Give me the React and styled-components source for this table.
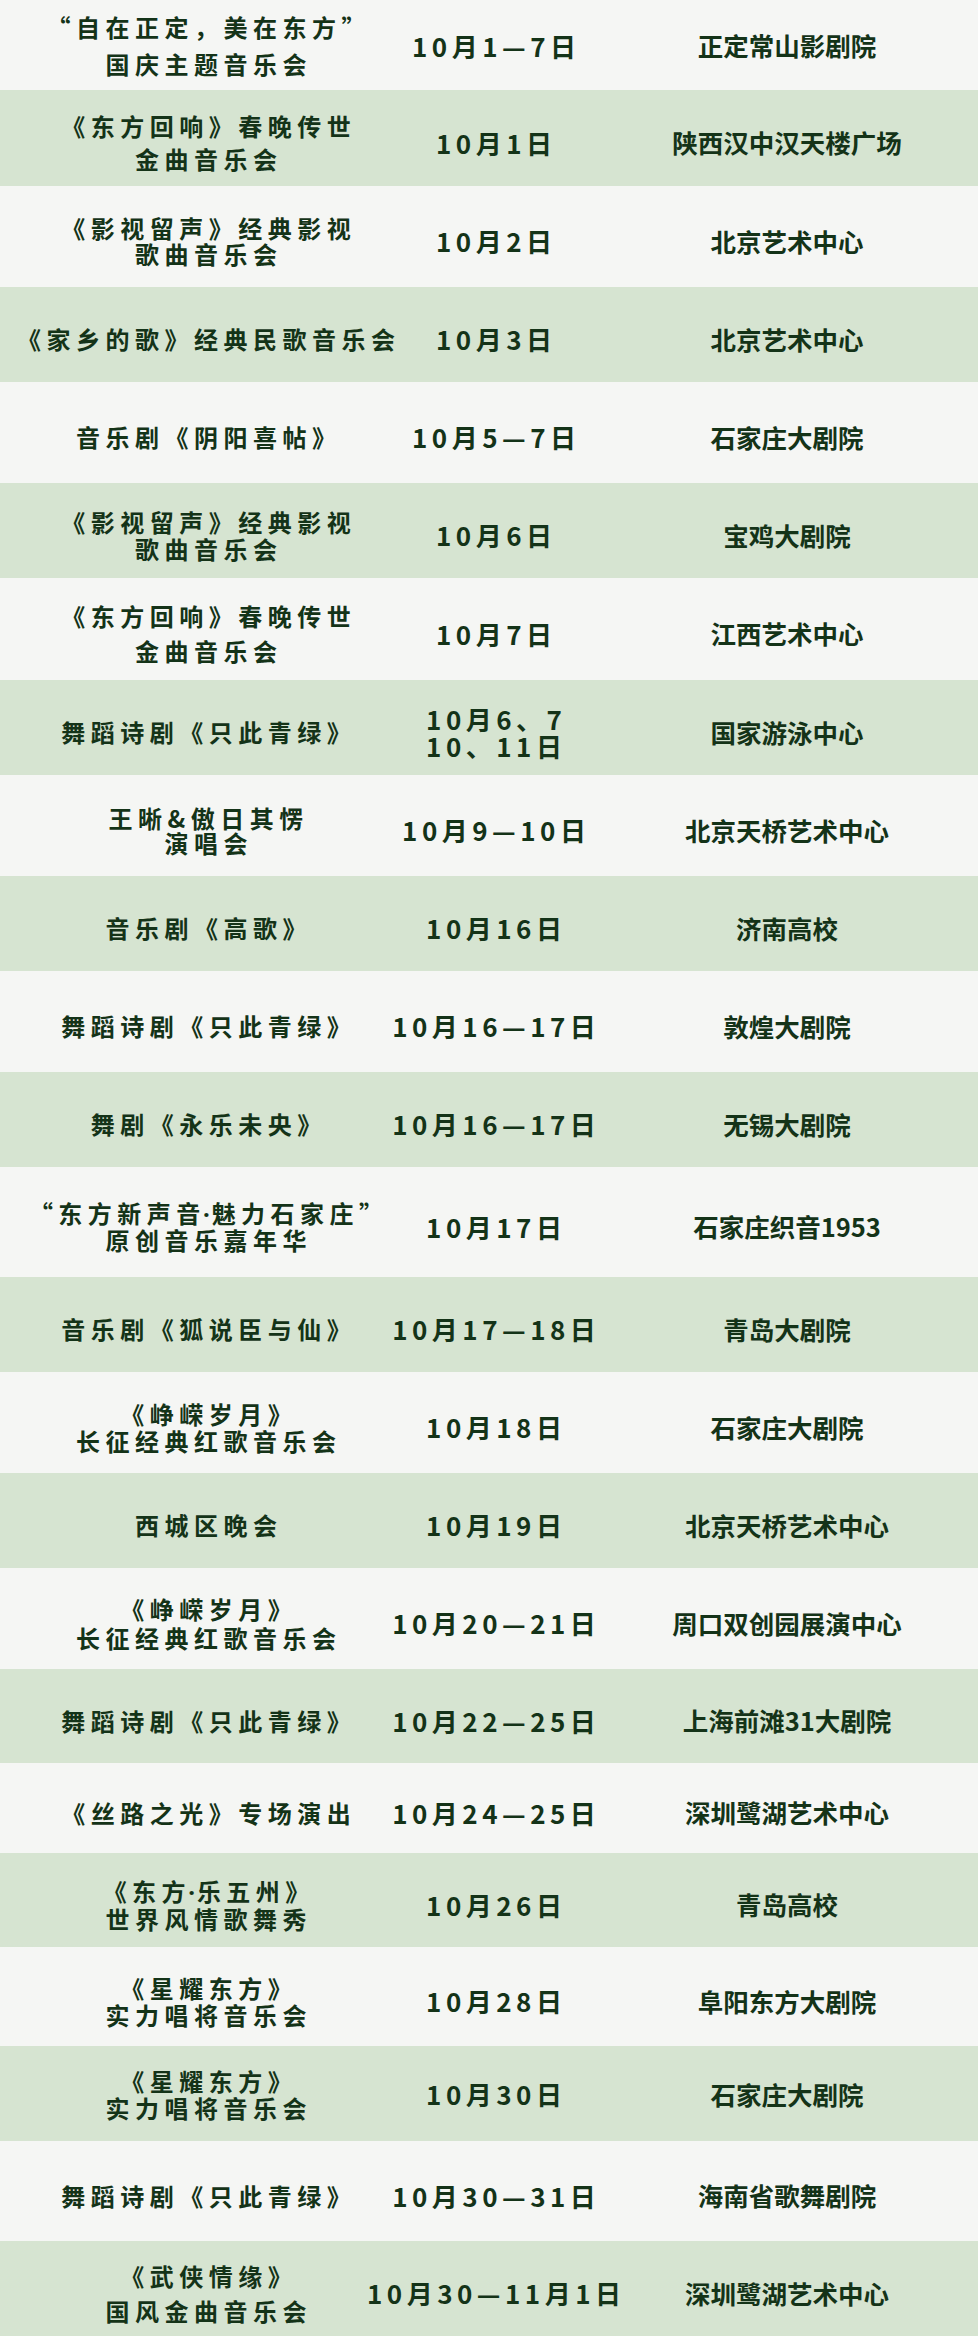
import React from "react";
import styled, { createGlobalStyle } from "styled-components";

const GlobalStyle = createGlobalStyle`
  html, body {
    margin: 0;
    padding: 0;
    background: #f5f6f4;
  }
  body {
    font-family: "Noto Sans CJK SC", "Noto Sans", sans-serif;
  }
`;

const Table = styled.div`
  width: 978px;
  display: flex;
  flex-direction: column;
`;

const Row = styled.div`
  display: grid;
  grid-template-columns: 412px 164px 1fr;
  height: ${(p) => p.$h}px;
  background: ${(p) => (p.$green ? "#d6e4d1" : "#f5f6f4")};
  color: #143318;
  padding-top: ${(p) => (p.$pt != null ? p.$pt : 8)}px;
  box-sizing: border-box;
`;

const Cell = styled.div`
  display: flex;
  justify-content: center;
  align-items: center;
  white-space: nowrap;
  padding-left: ${(p) => p.$pad || 0}px;
`;

const Title = styled.div`
  font-size: 24px;
  font-weight: 700;
  letter-spacing: 5.5px;
  margin-right: -5.5px;
  line-height: ${(p) => p.$lh}px;
  text-align: center;
`;

const Dot = styled.span`
  font-family: "Noto Sans", sans-serif;
  letter-spacing: 2px;
  margin-left: -3px;
`;

const DateText = styled.div`
  font-size: 26px;
  font-weight: 700;
  letter-spacing: 4.5px;
  margin-right: -4.5px;
  line-height: 27px;
  text-align: center;
`;

const Venue = styled.div`
  font-size: 25.5px;
  font-weight: 700;
  line-height: 30px;
  text-align: center;
`;

const rows = [
  { h: 90, lh: 37, pt: 0, title: ["“自在正定，美在东方”", "国庆主题音乐会"], date: ["10月1—7日"], venue: "正定常山影剧院" },
  { h: 96, lh: 33, title: ["《东方回响》春晚传世", "金曲音乐会"], date: ["10月1日"], venue: "陕西汉中汉天楼广场" },
  { h: 101, lh: 26, title: ["《影视留声》经典影视", "歌曲音乐会"], date: ["10月2日"], venue: "北京艺术中心" },
  { h: 95, lh: 27, title: ["《家乡的歌》经典民歌音乐会"], date: ["10月3日"], venue: "北京艺术中心" },
  { h: 101, lh: 27, title: ["音乐剧《阴阳喜帖》"], date: ["10月5—7日"], venue: "石家庄大剧院" },
  { h: 95, lh: 27, title: ["《影视留声》经典影视", "歌曲音乐会"], date: ["10月6日"], venue: "宝鸡大剧院" },
  { h: 102, lh: 35, title: ["《东方回响》春晚传世", "金曲音乐会"], date: ["10月7日"], venue: "江西艺术中心" },
  { h: 95, lh: 27, title: ["舞蹈诗剧《只此青绿》"], date: ["10月6、7", "10、11日"], venue: "国家游泳中心" },
  { h: 101, lh: 25, title: ["王晰&傲日其愣", "演唱会"], date: ["10月9—10日"], venue: "北京天桥艺术中心" },
  { h: 95, lh: 27, title: ["音乐剧《高歌》"], date: ["10月16日"], venue: "济南高校" },
  { h: 101, lh: 27, title: ["舞蹈诗剧《只此青绿》"], date: ["10月16—17日"], venue: "敦煌大剧院" },
  { h: 95, lh: 27, title: ["舞剧《永乐未央》"], date: ["10月16—17日"], venue: "无锡大剧院" },
  { h: 110, lh: 26, title: ["“东方新声音·魅力石家庄”", "原创音乐嘉年华"], date: ["10月17日"], venue: "石家庄织音1953" },
  { h: 95, lh: 27, title: ["音乐剧《狐说臣与仙》"], date: ["10月17—18日"], venue: "青岛大剧院" },
  { h: 101, lh: 27, title: ["《峥嵘岁月》", "长征经典红歌音乐会"], date: ["10月18日"], venue: "石家庄大剧院" },
  { h: 95, lh: 27, title: ["西城区晚会"], date: ["10月19日"], venue: "北京天桥艺术中心" },
  { h: 101, lh: 29, title: ["《峥嵘岁月》", "长征经典红歌音乐会"], date: ["10月20—21日"], venue: "周口双创园展演中心" },
  { h: 94, lh: 27, title: ["舞蹈诗剧《只此青绿》"], date: ["10月22—25日"], venue: "上海前滩31大剧院" },
  { h: 90, lh: 27, title: ["《丝路之光》专场演出"], date: ["10月24—25日"], venue: "深圳鹭湖艺术中心" },
  { h: 94, lh: 27, title: ["《东方·乐五州》", "世界风情歌舞秀"], date: ["10月26日"], venue: "青岛高校" },
  { h: 99, lh: 27, title: ["《星耀东方》", "实力唱将音乐会"], date: ["10月28日"], venue: "阜阳东方大剧院" },
  { h: 95, lh: 27, pt: 0, title: ["《星耀东方》", "实力唱将音乐会"], date: ["10月30日"], venue: "石家庄大剧院" },
  { h: 100, lh: 27, title: ["舞蹈诗剧《只此青绿》"], date: ["10月30—31日"], venue: "海南省歌舞剧院" },
  { h: 95, lh: 35, title: ["《武侠情缘》", "国风金曲音乐会"], date: ["10月30—11月1日"], venue: "深圳鹭湖艺术中心" },
];

// the middle dot is half-width in the picture, so it gets a Latin font
function withDot(text) {
  const parts = text.split("·");
  return parts.map((part, i) => (
    <React.Fragment key={i}>
      {i > 0 && <Dot>·</Dot>}
      {part}
    </React.Fragment>
  ));
}

function Lines({ items }) {
  return items.map((line, i) => <div key={i}>{withDot(line)}</div>);
}

export default function App() {
  return (
    <>
      <GlobalStyle />
      <Table>
        {rows.map((r, i) => (
          <Row key={i} $h={r.h} $pt={r.pt} $green={i % 2 === 1}>
            <Cell>
              <Title $lh={r.lh}>
                <Lines items={r.title} />
              </Title>
            </Cell>
            <Cell>
              <DateText>
                <Lines items={r.date} />
              </DateText>
            </Cell>
            <Cell $pad={20}>
              <Venue>{r.venue}</Venue>
            </Cell>
          </Row>
        ))}
      </Table>
    </>
  );
}
